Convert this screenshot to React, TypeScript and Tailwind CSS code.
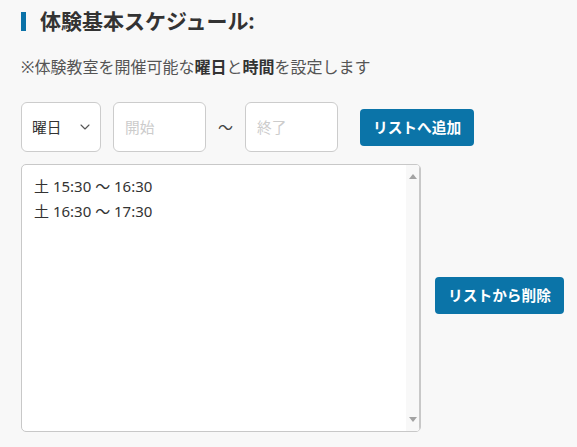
import { ChevronDown } from "lucide-react";

const font = { fontFamily: '"Noto Sans", "Noto Sans CJK JP", sans-serif' };

const slots = ["土 15:30 〜 16:30", "土 16:30 〜 17:30"];

export default function App() {
  return (
    <div
      className="h-[447px] w-full overflow-hidden bg-[#f8f8f8] pl-[21px] text-[#333]"
      style={font}
    >
      {/* heading */}
      <div className="flex items-center pt-[11px]">
        <span className="h-[19px] w-[5px] bg-[#0b72a8]" />
        <h2 className="ml-[14px] text-[21px] leading-[21px] font-bold text-[#333]">
          体験基本スケジュール:
        </h2>
      </div>

      <p className="mt-[24px] text-[16px] leading-[22px] text-[#555]">
        ※体験教室を開催可能な<b className="text-[#333]">曜日</b>と
        <b className="text-[#333]">時間</b>を設定します
      </p>

      {/* inputs */}
      <div className="mt-[24px] flex items-center">
        <div className="flex h-[50px] w-[80px] items-center justify-between rounded-[6px] border border-[#cccccc] bg-white pr-[7px] pl-[10px] text-[14.7px] text-[#333]">
          <span>曜日</span>
          <ChevronDown size={16} strokeWidth={1.6} className="text-[#555]" />
        </div>
        <div className="ml-[12px] flex h-[50px] w-[93px] items-center rounded-[6px] border border-[#cccccc] bg-white pl-[11px] text-[14.7px] text-[#cccccc]">
          開始
        </div>
        <span className="mx-[12px] text-[15px] text-[#444]">〜</span>
        <div className="flex h-[50px] w-[93px] items-center rounded-[6px] border border-[#cccccc] bg-white pl-[11px] text-[14.7px] text-[#cccccc]">
          終了
        </div>
        <button className="ml-[22px] h-[37px] w-[114px] rounded-[4px] bg-[#0b74a8] text-[14.7px] font-bold text-white">
          リストへ追加
        </button>
      </div>

      {/* list */}
      <div className="mt-[12px] flex items-center">
        <div className="flex h-[268px] w-[400px] overflow-hidden rounded-[5px] border border-[#c8c8c8] bg-white">
          <div className="flex-1 pt-[9px] pl-[12px] text-[15px] leading-[25px] text-[#333]">
            {slots.map((s) => (
              <div key={s}>{s}</div>
            ))}
          </div>
          <div className="flex w-[14px] flex-col items-center justify-between border-r border-[#c8c8c8] bg-[#f8f8f8] py-[9px]">
            <svg width="8" height="5" viewBox="0 0 8 5">
              <path d="M0 5 L4 0 L8 5 Z" fill="#a3a3a3" />
            </svg>
            <svg width="8" height="5" viewBox="0 0 8 5">
              <path d="M0 0 L8 0 L4 5 Z" fill="#a3a3a3" />
            </svg>
          </div>
        </div>
        <button className="-mt-[6px] ml-[14px] h-[37px] w-[129px] rounded-[4px] bg-[#0b74a8] text-[14.7px] font-bold text-white">
          リストから削除
        </button>
      </div>
    </div>
  );
}
